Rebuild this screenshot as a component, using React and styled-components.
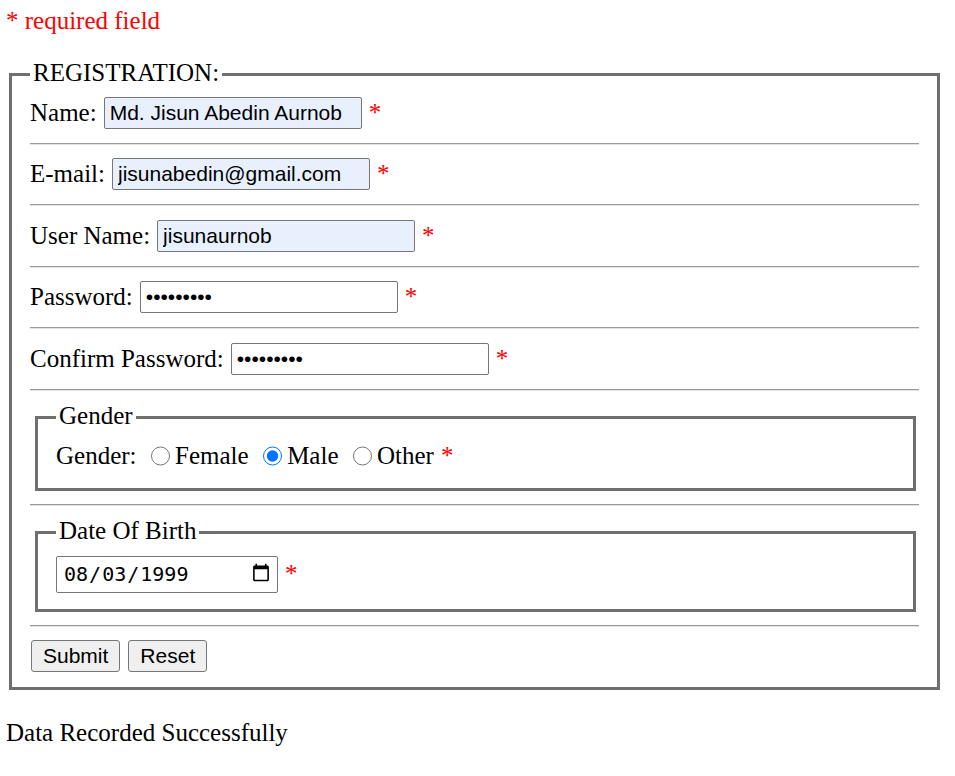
import React from "react";
import styled, { createGlobalStyle } from "styled-components";

const GlobalStyle = createGlobalStyle`
  body {
    margin: 0;
    background: #fff;
    color: #000;
    font-family: "Liberation Serif", "Times New Roman", serif;
    font-size: 25px;
    line-height: 26.6px;
  }
`;

const App = () => {
  return (
    <Page>
      <GlobalStyle />
      <Note>* required field</Note>
      <Form onSubmit={(e) => e.preventDefault()}>
        <Fieldset>
          <Legend>REGISTRATION:</Legend>
          <Row>
            <span>Name:</span>
            <Field $filled defaultValue="Md. Jisun Abedin Aurnob" />
            <Required>*</Required>
          </Row>
          <Divider />
          <Row>
            <span>E-mail:</span>
            <Field $filled type="email" defaultValue="jisunabedin@gmail.com" />
            <Required>*</Required>
          </Row>
          <Divider />
          <Row>
            <span>User Name:</span>
            <Field $filled defaultValue="jisunaurnob" />
            <Required>*</Required>
          </Row>
          <Divider />
          <Row>
            <span>Password:</span>
            <Field type="password" defaultValue="123456789" />
            <Required>*</Required>
          </Row>
          <Divider />
          <Row>
            <span>Confirm Password:</span>
            <Field type="password" defaultValue="123456789" />
            <Required>*</Required>
          </Row>
          <Divider />
          <Fieldset $nested>
            <Legend>Gender</Legend>
            <GenderRow>
              <span>Gender:</span>
              <Option>
                <Radio name="gender" value="female" />
                Female
              </Option>
              <Option>
                <Radio name="gender" value="male" defaultChecked />
                Male
              </Option>
              <Option>
                <Radio name="gender" value="other" />
                Other
              </Option>
              <Required $gap>*</Required>
            </GenderRow>
          </Fieldset>
          <Divider />
          <Fieldset $nested>
            <Legend>Date Of Birth</Legend>
            <DateRow>
              <DateField defaultValue="1999-08-03" />
              <Required>*</Required>
            </DateRow>
          </Fieldset>
          <Divider />
          <Buttons>
            <Button type="submit">Submit</Button>
            <Button type="reset">Reset</Button>
          </Buttons>
        </Fieldset>
      </Form>
      <Status>Data Recorded Successfully</Status>
    </Page>
  );
};

export default App;

const Page = styled.div`
  padding: 8px 12px 24px 6px;
`;

const Note = styled.p`
  margin: 0 0 25.4px;
  color: #f00;
`;

const Form = styled.form`
  margin: 0;
`;

const Fieldset = styled.fieldset`
  margin: ${(p) => (p.$nested ? "0 3px 13px 5px" : "0 3px")};
  padding: ${(p) => (p.$nested ? "8px 18px 15.5px" : "5.5px 18px 14.5px")};
  border: 3px solid #6f6f6f;
  min-width: 0;
`;

const Legend = styled.legend`
  padding: 0 3px 3px;
`;

const Row = styled.div`
  display: flex;
  align-items: center;
  gap: 7px;
  height: 35.5px;
`;

const Field = styled.input`
  box-sizing: border-box;
  width: 258px;
  height: 32px;
  margin: 0;
  padding: 0 5px;
  border: 1px solid #767676;
  border-radius: 2px;
  background: ${(p) => (p.$filled ? "#e8f0fe" : "#fff")};
  color: #000;
  font-family: "Liberation Sans", Arial, sans-serif;
  font-size: 21px;
  outline: none;
`;

const Required = styled.span`
  color: #f00;
  margin-left: ${(p) => (p.$gap ? "7px" : "0")};
`;

const Divider = styled.hr`
  margin: 12px 0;
  border: 0;
  border-top: 1px solid #9a9a9a;
  border-bottom: 1px solid #e2e2e2;
`;

const GenderRow = styled.div`
  display: flex;
  align-items: center;
  height: 32px;
`;

const Option = styled.label`
  display: flex;
  align-items: center;
`;

const Radio = styled.input.attrs({ type: "radio" })`
  width: 19.5px;
  height: 19.5px;
  margin: 0 5px 0 14px;
  accent-color: #0075ff;
`;

const DateRow = styled.div`
  display: flex;
  align-items: center;
  gap: 7px;
  height: 38px;
`;

const DateField = styled.input.attrs({ type: "date" })`
  box-sizing: border-box;
  width: 222px;
  height: 37px;
  margin: 0;
  padding: 0 6px;
  border: 1px solid #767676;
  border-radius: 2px;
  background: #fff;
  color: #000;
  font-family: "DejaVu Sans Mono", "Liberation Mono", monospace;
  font-size: 20px;

  &::-webkit-calendar-picker-indicator {
    width: 20px;
    height: 22px;
    margin: 0;
    padding: 0;
  }
`;

const Buttons = styled.div`
  display: flex;
  align-items: center;
  gap: 8px;
  height: 34px;
  padding-left: 1px;
`;

const Button = styled.button`
  height: 32px;
  padding: 0 11px;
  border: 1px solid #767676;
  border-radius: 3px;
  background: #efefef;
  color: #000;
  font-family: "Liberation Sans", Arial, sans-serif;
  font-size: 21px;
`;

const Status = styled.p`
  margin: 30px 0 0;
`;
